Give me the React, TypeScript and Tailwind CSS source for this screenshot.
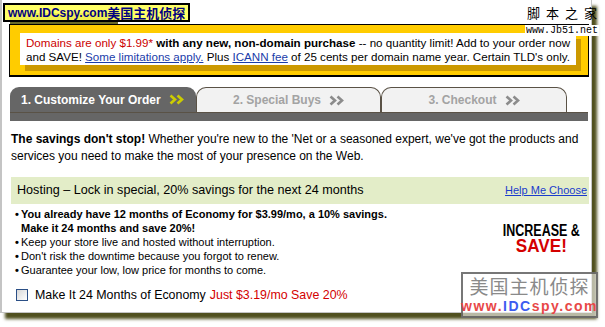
import React from 'react';

const Chevrons = ({ color }: { color: string }) => (
  <svg width="15" height="11" viewBox="0 0 15 11" className="ml-2 shrink-0">
    <polyline points="1.5,1.5 6,5.5 1.5,9.5" fill="none" stroke={color} strokeWidth="2.6" />
    <polyline points="8.5,1.5 13,5.5 8.5,9.5" fill="none" stroke={color} strokeWidth="2.6" />
  </svg>
);

const Bullet = ({ children, bold }: { children: React.ReactNode; bold?: boolean }) => (
  <li className={`flex ${bold ? 'font-bold' : ''}`}>
    <span className="w-[6px] shrink-0 font-bold">•</span>
    <span>{children}</span>
  </li>
);

export default function App() {
  return (
    <div
      className="relative w-[605px] h-[327px] overflow-hidden bg-white text-black"
      style={{ fontFamily: '"Liberation Sans", Arial, sans-serif' }}
    >
      {/* framed screenshot */}
      <div className="w-[592px] h-[313px] bg-white border-l-2 border-r border-b border-[#c4c4c4] shadow-[5px_6px_3px_#50501f] pt-[24px] pl-[7px] pr-[3px]">
        {/* domain offer */}
        <div className="w-[580px] h-[53px] border border-b-2 border-black bg-[#ffcc00] pt-[8px] pl-[10px]">
          <div className="w-[556px] h-[32px] bg-white shadow-[5px_6px_0_#cc9900] pt-[3px] pl-[6px] text-[11.6px] leading-[14px] whitespace-nowrap">
            <span className="text-[#cc0000]">Domains are only $1.99*</span>{' '}
            <b>with any new, non-domain purchase</b> -- no quantity limit! Add to your order now
            <br />
            and SAVE! <span className="text-[#1a3caa] underline">Some limitations apply.</span> Plus{' '}
            <span className="text-[#1a3caa] underline">ICANN fee</span> of 25 cents per domain name year. Certain TLD's only.
          </div>
        </div>

        {/* tabs */}
        <div className="mt-[10px] flex items-end h-[25px] pl-[1px]">
          <div className="w-[186px] h-[25px] bg-[#666666] rounded-t-[9px] flex items-center pl-[11px] text-white font-bold text-[12px]">
            1. Customize Your Order
            <Chevrons color="#cccc00" />
          </div>
          <div className="w-[185px] h-[25px] bg-[#f2f2f2] border border-b-0 border-[#5a5246] rounded-t-[10px] flex items-center justify-center text-[#a3a3a3] font-bold text-[12px]">
            2. Special Buys
            <Chevrons color="#8c8c8c" />
          </div>
          <div className="w-[186px] h-[25px] bg-[#f2f2f2] border border-b-0 border-[#5a5246] rounded-t-[10px] flex items-center justify-center text-[#a3a3a3] font-bold text-[12px]">
            3. Checkout
            <Chevrons color="#8c8c8c" />
          </div>
        </div>
        <div className="ml-[1px] w-[578px] h-[9px] bg-[#666666] border-t border-[#5a5246]" />

        {/* intro */}
        <p className="mt-[10px] ml-[2px] text-[12px] leading-[17px]">
          <b>The savings don't stop!</b> Whether you're new to the 'Net or a seasoned expert, we've got the products and
          <br />
          services you need to make the most of your presence on the Web.
        </p>

        {/* hosting */}
        <div className="mt-[12px] ml-[2px] w-[578px] h-[27px] bg-[#e3edc8] flex items-center justify-between pl-[6px] pr-[2px]">
          <span className="text-[12.6px]">Hosting – Lock in special, 20% savings for the next 24 months</span>
          <span className="text-[11px] text-[#1a3ccc] underline">Help Me Choose</span>
        </div>

        <div className="ml-[2px] w-[578px] flex">
          <ul className="flex-1 mt-[3px] pl-[4px] text-[11px] leading-[14px]">
            <Bullet bold>
              You already have 12 months of Economy for $3.99/mo, a 10% savings.
              <br />
              Make it 24 months and save 20%!
            </Bullet>
            <Bullet>Keep your store live and hosted without interruption.</Bullet>
            <Bullet>Don't risk the downtime because you forgot to renew.</Bullet>
            <Bullet>Guarantee your low, low price for months to come.</Bullet>
          </ul>
          <div className="w-[96px] flex flex-col items-center pt-[20px] font-bold whitespace-nowrap">
            <span className="inline-block text-[16px] leading-[13px] scale-x-[0.78]">INCREASE &amp;</span>
            <span className="inline-block mt-[1px] text-[19px] leading-[15px] text-[#d40000] scale-x-[0.9]">SAVE!</span>
          </div>
        </div>

        {/* checkbox */}
        <label className="mt-[9px] ml-[7px] flex items-center text-[12.4px]">
          <span className="w-[12px] h-[12px] border border-[#2b4f86] bg-gradient-to-br from-[#d8d8d8] to-white shrink-0" />
          <span className="ml-[7px]">Make It 24 Months of Economy</span>
          <span className="ml-[4px] text-[#d40000]">Just $3.19/mo Save 20%</span>
        </label>
      </div>

      {/* watermarks */}
      <div className="absolute left-[10px] top-[13px] w-[108px] h-[11px] bg-[#6b6b2a]" />
      <div
        className="absolute left-[3px] top-[3px] w-[187px] h-[19px] border-2 border-black bg-[#ffff55]/90 flex items-center pl-[3px] text-[#000080] font-bold text-[12px] whitespace-nowrap"
      >
        www.IDCspy.com
        <span className="text-[13px]" style={{ fontFamily: '"Noto Sans CJK SC", sans-serif' }}>美国主机侦探</span>
      </div>
      <div
        className="absolute left-[527px] top-[4px] text-[13px] leading-[18px] tracking-[6px]"
        style={{ fontFamily: '"Noto Sans CJK SC", sans-serif' }}
      >
        脚本之家
      </div>
      <div
        className="absolute left-[525px] top-[25px] bg-white px-[1px] text-[10px] leading-[11px]"
        style={{ fontFamily: '"Liberation Mono", monospace' }}
      >
        www.Jb51.net
      </div>
      <div className="absolute left-[461px] top-[272px] w-[137px] h-[46px] border-2 border-[#555555]/80 bg-white/60 flex flex-col items-center">
        <span
          className="text-[19px] leading-[24px] text-[#8a8a8a] tracking-[1px]"
          style={{ fontFamily: '"Noto Sans CJK SC", sans-serif' }}
        >
          美国主机侦探
        </span>
        <span className="text-[14px] leading-[16px] font-bold tracking-[1.5px] text-[#e84848]">
          www.<span className="text-[#3c5cf0]">IDC</span>spy.com
        </span>
      </div>
    </div>
  );
}
